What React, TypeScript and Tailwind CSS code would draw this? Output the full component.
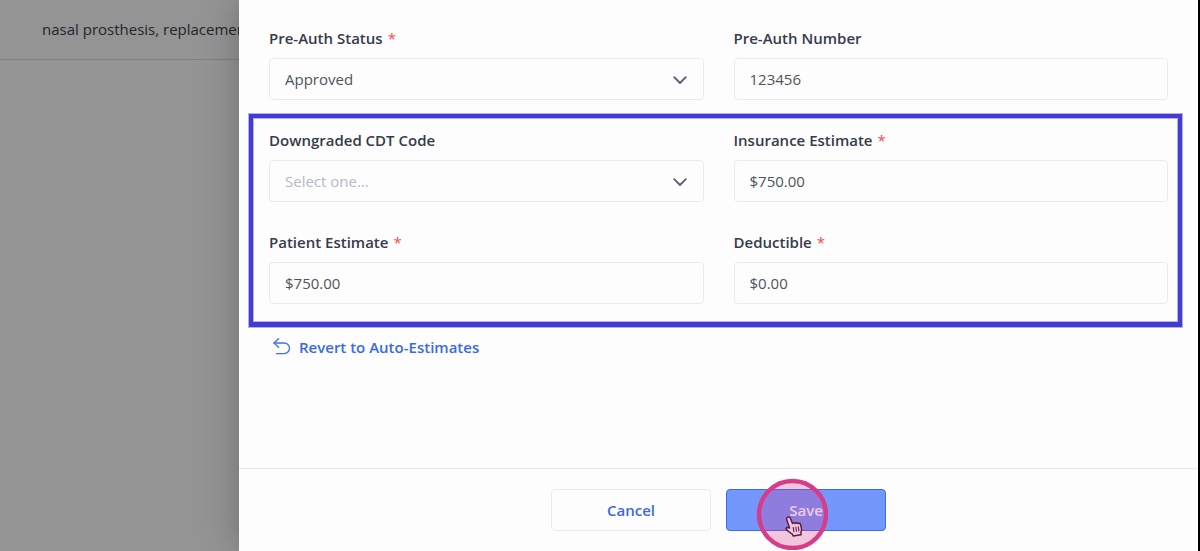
import { useState } from "react";
import type { ReactNode } from "react";

const controlClass =
  "h-[42px] w-full appearance-none rounded-[4px] border border-[#e8ecf2] bg-[#fdfdfd] px-[15px] text-[15px] outline-none";

function Field({
  id,
  label,
  required,
  children,
}: {
  id: string;
  label: string;
  required?: boolean;
  children: ReactNode;
}) {
  return (
    <div className="flex flex-col gap-[9px]">
      <label
        htmlFor={id}
        className="text-[15px] leading-[22px] font-semibold text-[#363a4b]"
      >
        {label}
        {required && (
          <span className="ml-[5px] font-normal text-[#f4484c]">*</span>
        )}
      </label>
      {children}
    </div>
  );
}

function TextField({
  id,
  label,
  required,
  initial,
}: {
  id: string;
  label: string;
  required?: boolean;
  initial: string;
}) {
  const [value, setValue] = useState(initial);
  return (
    <Field id={id} label={label} required={required}>
      <input
        id={id}
        type="text"
        value={value}
        onChange={(e) => setValue(e.target.value)}
        className={`${controlClass} text-[#50545c]`}
      />
    </Field>
  );
}

function SelectField({
  id,
  label,
  required,
  initial = "",
  options,
}: {
  id: string;
  label: string;
  required?: boolean;
  initial?: string;
  options: string[];
}) {
  const [value, setValue] = useState(initial);
  return (
    <Field id={id} label={label} required={required}>
      <div className="relative">
        <select
          id={id}
          value={value}
          onChange={(e) => setValue(e.target.value)}
          className={`${controlClass} ${value ? "text-[#50545c]" : "text-[#b3bac5]"}`}
        >
          <option value="">Select one...</option>
          {options.map((option) => (
            <option key={option}>{option}</option>
          ))}
        </select>
        <svg
          viewBox="0 0 14 8"
          className="pointer-events-none absolute top-[18px] right-[17px] h-2 w-[14px]"
          fill="none"
          stroke="#566176"
          strokeWidth="1.8"
          strokeLinecap="round"
          strokeLinejoin="round"
        >
          <path d="M1.2 1.2 7 7l5.8-5.8" />
        </svg>
      </div>
    </Field>
  );
}

function UndoIcon() {
  return (
    <svg
      viewBox="0 0 18 18"
      className="h-[18px] w-[18px]"
      fill="none"
      stroke="#3f70ea"
      strokeWidth="1.3"
      strokeLinecap="round"
      strokeLinejoin="round"
    >
      <path d="M5.6.7 1 5l4.6 4.3" />
      <path d="M1 5h10.2a5.3 5.3 0 0 1 0 10.6H3.4" />
    </svg>
  );
}

function ClickMarker() {
  return (
    <span className="pointer-events-none absolute -top-3 left-[29px] h-[72px] w-[72px]">
      <svg viewBox="0 0 72 72" className="h-full w-full" fill="none">
        <g transform="translate(29 38)">
          <path
            d="M2.4 1.3C3.6.5 5 1.1 5.5 2.4l2 5.2c.6-1 2-1.1 2.7-.1.7-.9 2.1-.9 2.7.1.9-.7 2.3-.3 2.6.8l.9 3.6c.4 1.7.1 3.1-.5 4.4l.2 2.3-8 1.3-.7-1.8c-2-1-3.8-3-5.8-4.2-1.1-.8-.5-2.6 1-2.5l2 .6L1.7 3.5c-.3-.9 0-1.8.7-2.2Z"
            fill="#fff"
            stroke="#26162e"
            strokeWidth="1.5"
            strokeLinejoin="round"
          />
          <path
            d="m8.2 11.4.7 4.3M10.8 11l.7 4.3M13.3 10.7l.6 4.2"
            stroke="#26162e"
            strokeWidth="1.1"
            strokeLinecap="round"
          />
        </g>
        <circle
          cx="36.5"
          cy="36.5"
          r="33.5"
          fill="#d93a8c"
          fillOpacity="0.28"
        />
        <circle
          cx="36.5"
          cy="36.5"
          r="33.5"
          stroke="#d73c8b"
          strokeWidth="4.4"
        />
      </svg>
    </span>
  );
}

export default function App() {
  return (
    <div className="flex min-h-screen overflow-hidden bg-[#949494] font-['Open_Sans',sans-serif]">
      <aside className="w-[239px] shrink-0 overflow-hidden">
        <p className="border-b border-[#808086] pt-[18px] pb-[19px] pl-[42px] text-[15px] leading-[22px] whitespace-nowrap text-[#24242c]">
          nasal prosthesis, replacement
        </p>
      </aside>

      <main className="relative flex min-w-0 flex-1 flex-col border-r-2 border-black bg-[#fdfdfd] shadow-[0_0_36px_rgba(0,0,0,0.25)]">
        <form
          className="flex flex-1 flex-col"
          onSubmit={(e) => e.preventDefault()}
        >
          <div className="flex flex-1 flex-col gap-[29px] px-[30px] pt-[27px] pb-8">
            <div className="grid grid-cols-2 gap-x-[30px]">
              <SelectField
                id="status"
                label="Pre-Auth Status"
                required
                initial="Approved"
                options={["Approved", "Pending", "Denied"]}
              />
              <TextField
                id="number"
                label="Pre-Auth Number"
                initial="123456"
              />
            </div>

            <div className="relative grid grid-cols-2 gap-x-[30px] gap-y-[29px]">
              <SelectField
                id="cdt"
                label="Downgraded CDT Code"
                options={["D2140", "D2150"]}
              />
              <TextField
                id="insurance"
                label="Insurance Estimate"
                required
                initial="$750.00"
              />
              <TextField
                id="patient"
                label="Patient Estimate"
                required
                initial="$750.00"
              />
              <TextField
                id="deductible"
                label="Deductible"
                required
                initial="$0.00"
              />
              <div className="pointer-events-none absolute -top-[15px] -right-[14px] -bottom-[23px] -left-5 border-4 border-b-5 border-[#433bd6] ring-1 ring-[#b4b0ef] inset-ring-1 inset-ring-[#b4b0ef]" />
            </div>

            <a
              href="#revert"
              className="ml-1 flex items-center gap-2 self-start text-[15px] leading-7 font-semibold text-[#3a69e6]"
            >
              <UndoIcon />
              Revert to Auto-Estimates
            </a>
          </div>

          <footer className="flex justify-center gap-[15px] border-t border-[#e6e8ed] py-5">
            <button
              type="button"
              className="h-[42px] w-[160px] rounded-[4px] border border-[#e8ecf2] text-[15px] font-semibold text-[#3a69e6]"
            >
              Cancel
            </button>
            <button
              type="submit"
              className="relative h-[42px] w-[160px] rounded-[4px] border border-[#3a6cf0] bg-[#7397fd] text-[15px] font-semibold text-white"
            >
              Save
              <ClickMarker />
            </button>
          </footer>
        </form>
      </main>
    </div>
  );
}
